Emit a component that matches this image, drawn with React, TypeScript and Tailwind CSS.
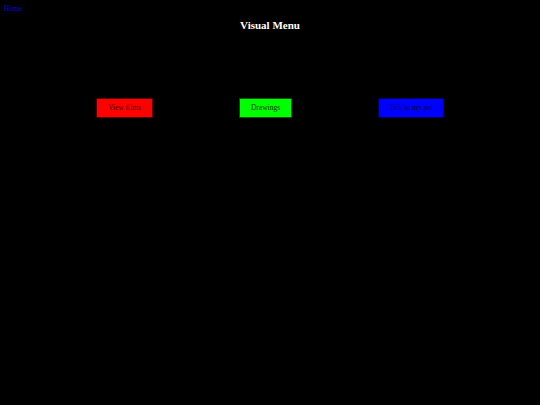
export default function App() {
  return (
    <div className="w-[540px] h-[405px] bg-black relative font-['Liberation_Serif',serif] overflow-hidden">
      <a href="#" className="absolute left-[4px] top-[4px] text-[7.5px] leading-[10px] text-[#0000ee]">
        Home
      </a>
      <h1 className="pt-[19px] text-center text-[11px] leading-[12px] font-bold text-white">Visual Menu</h1>
      <div className="mt-[67px] flex justify-center gap-[86px]">
        <button className="w-[57px] h-[20px] bg-[#ff0000] border border-[#550000] text-[7.5px] text-[#330000]">
          View films
        </button>
        <button className="w-[53px] h-[20px] bg-[#00ff00] border border-[#005500] text-[7.5px] text-[#003300]">
          Drawings
        </button>
        <button className="w-[66px] h-[20px] bg-[#0000ff] border border-[#000055] text-[7.5px] text-[#000033]">
          Talk to my pal
        </button>
      </div>
    </div>
  );
}
